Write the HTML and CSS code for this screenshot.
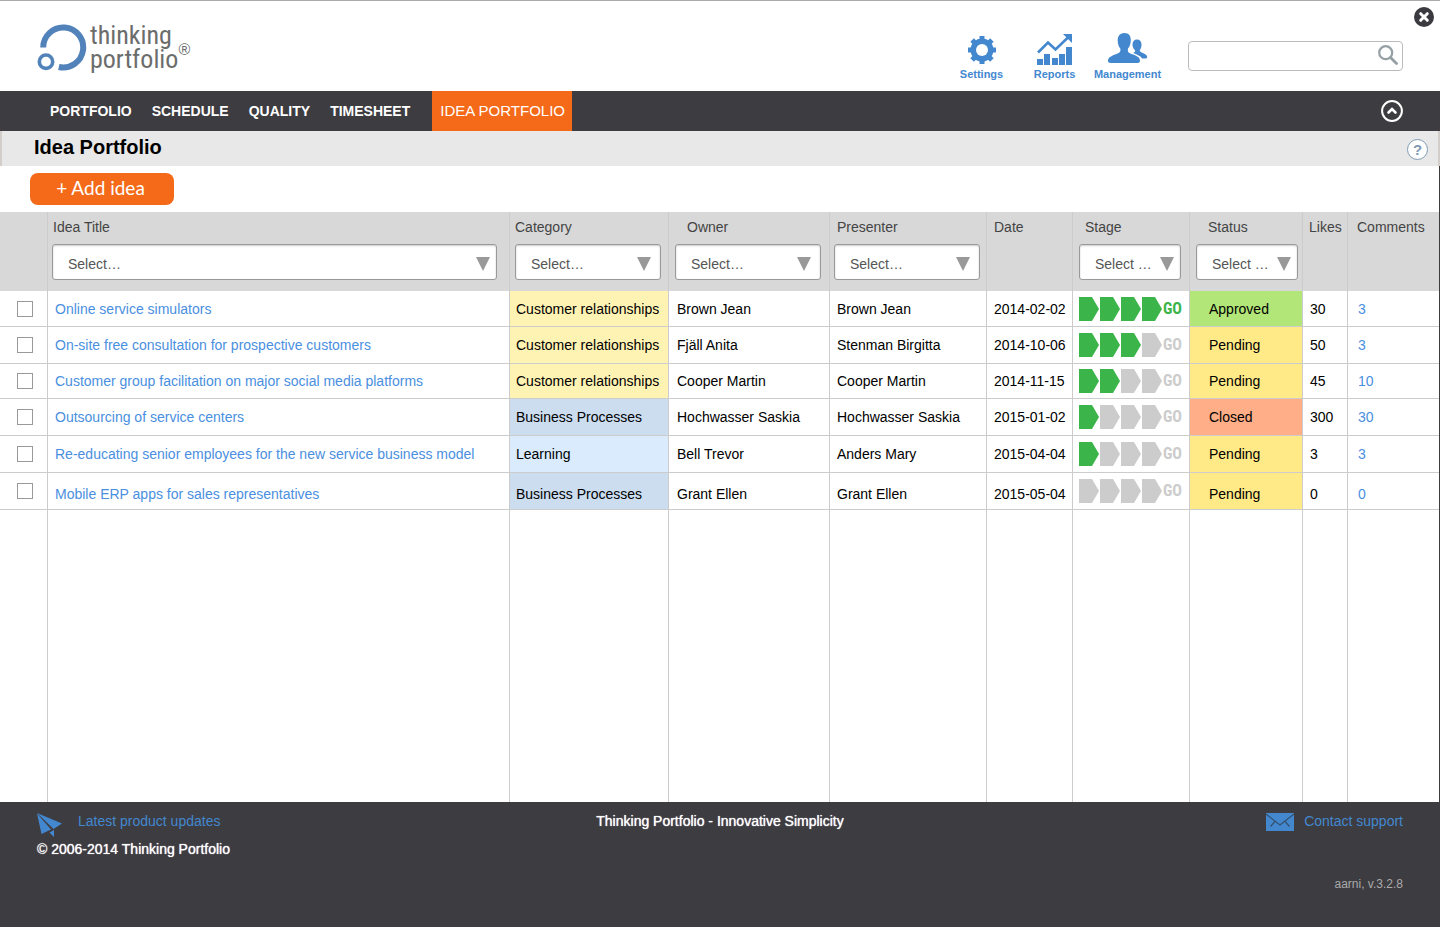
FILE: index.html
```html
<!DOCTYPE html>
<html lang="en">
<head>
<meta charset="utf-8">
<title>Idea Portfolio</title>
<link rel="stylesheet" href="styles.css">
</head>
<body>
<svg class="defs" aria-hidden="true">
  <symbol id="arrow" viewBox="0 0 20 24"><path d="M0 0h13l7 12-7 12H0z"/></symbol>
</svg>
<div class="page">
  <header class="top">
    <a class="logo" href="#" aria-label="Thinking Portfolio">
      <svg class="logo-mark" viewBox="37 22 50 48" fill="none" stroke="#5282ba">
        <path d="M43.200 46.500A20 20 0 1 1 58.800 66" stroke-width="6"/>
        <circle cx="46" cy="60.700" r="6.700" stroke-width="3.600"/>
      </svg>
      <span class="logo-text"><span>thinking</span><span>portfolio</span></span>
      <span class="logo-reg">®</span>
    </a>
    <div class="top-right">
      <nav class="actions" aria-label="Tools">
        <a href="#"><svg width="36" height="34" viewBox="0 0 36 34">
          <g fill="#4388cf"><path d="M15.500 5h5v28h-5z"/><path d="M15.500 5h5v28h-5z" transform="rotate(45 18 19)"/><path d="M15.500 5h5v28h-5z" transform="rotate(90 18 19)"/><path d="M15.500 5h5v28h-5z" transform="rotate(135 18 19)"/><circle cx="18" cy="19" r="11.500"/></g>
          <circle cx="18" cy="19" r="6" fill="#fff"/></svg>Settings</a>
        <a href="#"><svg width="36" height="34" viewBox="0 0 36 34">
          <g fill="#4388cf"><path d="M0 28h6v6H0zM7 23h6v11H7zM15 27h6v7h-6zM22 23h6v11h-6zM29 16h6v18h-6z"/><path d="M26 3h9v9z"/></g>
          <path d="M1 21.500L11 11.500l7.500 7L31.500 6" fill="none" stroke="#4388cf" stroke-width="2.600"/></svg>Reports</a>
        <a href="#"><svg width="40" height="34" viewBox="0 0 40 34"><g fill="#4388cf">
          <path d="M24.500 13.500c0-3 1.500-5 4.500-5s4.500 2 4.500 5c0 3-.8 4.500-1.800 6 0 2.500 7.500 2.800 7.500 6.500 0 1-1 1.500-2.500 1.500h-2.500c-2-3-6-4-9-5.500 1-1 2-1 2-2.500-1.500-1.500-2.700-3-2.700-6z"/>
          <path stroke="#fff" stroke-width="1" paint-order="stroke" d="M16.500 2c4.500 0 6.500 3 6.300 7.500-.2 3.500-1 6-2.800 8-.7 4 1 4.500 5 6 4.500 1.700 7 3 7 6.500 0 1.600-1.500 2-3 2H3c-2 0-3-.7-3-2 0-3.500 3-4.800 7-6.500 4-1.500 6-2 5.300-6-1.700-2-2.500-4.500-2.600-8C9.600 5 12 2 16.500 2z"/></g></svg>Management</a>
      </nav>
      <form class="search" role="search">
        <input type="search" aria-label="Search">
        <svg viewBox="0 0 20 20" width="20" height="20" fill="none" stroke="#96a0a4"><circle cx="7.700" cy="7.700" r="6.500" stroke-width="2.200"/><path d="M12.500 12.500l6 6" stroke-width="2.800" stroke-linecap="round"/></svg>
      </form>
    </div>
    <button class="close" type="button" aria-label="Close"><svg viewBox="0 0 20 20" width="20" height="20"><circle cx="10" cy="10" r="10" fill="#3b3a40"/><path d="M6.700 6.700l6.600 6.600M13.300 6.700l-6.600 6.600" stroke="#fff" stroke-width="3" stroke-linecap="round"/></svg></button>
  </header>

  <nav class="menu" aria-label="Main">
    <a href="#">PORTFOLIO</a><a href="#">SCHEDULE</a><a href="#">QUALITY</a><a href="#">TIMESHEET</a><a class="current" href="#">IDEA PORTFOLIO</a>
    <button type="button" aria-label="Collapse"><svg viewBox="0 0 22 22" width="22" height="22" fill="none" stroke="#fff"><circle cx="11" cy="11" r="9.900" stroke-width="2"/><path d="M7.500 12.500L11 9l3.500 3.500" stroke-width="2.600" stroke-linecap="round"/></svg></button>
  </nav>

  <div class="title-bar">
    <h1>Idea Portfolio</h1>
    <button class="help" type="button" aria-label="Help">?</button>
  </div>

  <main class="content">
    <div class="toolbar"><button class="add" type="button">+ Add idea</button></div>
    <table class="ideas">
      <colgroup><col class="w-check"><col><col class="w-category"><col class="w-owner"><col class="w-presenter"><col class="w-date"><col class="w-stage"><col class="w-status"><col class="w-likes"><col class="w-comments"></colgroup>
      <thead>
        <tr>
          <th class="check"></th>
          <th class="title"><label for="f-title">Idea Title</label><span class="pick"><select id="f-title"><option>Select…</option></select></span></th>
          <th class="category"><label for="f-category">Category</label><span class="pick"><select id="f-category"><option>Select…</option></select></span></th>
          <th class="owner"><label for="f-owner">Owner</label><span class="pick"><select id="f-owner"><option>Select…</option></select></span></th>
          <th class="presenter"><label for="f-presenter">Presenter</label><span class="pick"><select id="f-presenter"><option>Select…</option></select></span></th>
          <th class="date">Date</th>
          <th class="stage"><label for="f-stage">Stage</label><span class="pick"><select id="f-stage"><option>Select …</option></select></span></th>
          <th class="status"><label for="f-status">Status</label><span class="pick"><select id="f-status"><option>Select …</option></select></span></th>
          <th class="likes">Likes</th>
          <th class="comments">Comments</th>
        </tr>
      </thead>
      <tbody>
        <tr>
          <td class="check"><input type="checkbox" aria-label="Online service simulators"></td>
          <td class="title"><a href="#">Online service simulators</a></td>
          <td class="category customer">Customer relationships</td><td class="owner">Brown Jean</td><td class="presenter">Brown Jean</td><td class="date">2014-02-02</td>
          <td class="stage"><div class="steps"><svg class="on"><use href="#arrow"/></svg><svg class="on"><use href="#arrow"/></svg><svg class="on"><use href="#arrow"/></svg><svg class="on"><use href="#arrow"/></svg><span class="on">GO</span></div></td>
          <td class="status approved">Approved</td><td class="likes">30</td><td class="comments"><a href="#">3</a></td>
        </tr>
        <tr>
          <td class="check"><input type="checkbox" aria-label="On-site free consultation for prospective customers"></td>
          <td class="title"><a href="#">On-site free consultation for prospective customers</a></td>
          <td class="category customer">Customer relationships</td><td class="owner">Fjäll Anita</td><td class="presenter">Stenman Birgitta</td><td class="date">2014-10-06</td>
          <td class="stage"><div class="steps"><svg class="on"><use href="#arrow"/></svg><svg class="on"><use href="#arrow"/></svg><svg class="on"><use href="#arrow"/></svg><svg><use href="#arrow"/></svg><span>GO</span></div></td>
          <td class="status pending">Pending</td><td class="likes">50</td><td class="comments"><a href="#">3</a></td>
        </tr>
        <tr>
          <td class="check"><input type="checkbox" aria-label="Customer group facilitation on major social media platforms"></td>
          <td class="title"><a href="#">Customer group facilitation on major social media platforms</a></td>
          <td class="category customer">Customer relationships</td><td class="owner">Cooper Martin</td><td class="presenter">Cooper Martin</td><td class="date">2014-11-15</td>
          <td class="stage"><div class="steps"><svg class="on"><use href="#arrow"/></svg><svg class="on"><use href="#arrow"/></svg><svg><use href="#arrow"/></svg><svg><use href="#arrow"/></svg><span>GO</span></div></td>
          <td class="status pending">Pending</td><td class="likes">45</td><td class="comments"><a href="#">10</a></td>
        </tr>
        <tr>
          <td class="check"><input type="checkbox" aria-label="Outsourcing of service centers"></td>
          <td class="title"><a href="#">Outsourcing of service centers</a></td>
          <td class="category business">Business Processes</td><td class="owner">Hochwasser Saskia</td><td class="presenter">Hochwasser Saskia</td><td class="date">2015-01-02</td>
          <td class="stage"><div class="steps"><svg class="on"><use href="#arrow"/></svg><svg><use href="#arrow"/></svg><svg><use href="#arrow"/></svg><svg><use href="#arrow"/></svg><span>GO</span></div></td>
          <td class="status closed">Closed</td><td class="likes">300</td><td class="comments"><a href="#">30</a></td>
        </tr>
        <tr>
          <td class="check"><input type="checkbox" aria-label="Re-educating senior employees for the new service business model"></td>
          <td class="title"><a href="#">Re-educating senior employees for the new service business model</a></td>
          <td class="category learning">Learning</td><td class="owner">Bell Trevor</td><td class="presenter">Anders Mary</td><td class="date">2015-04-04</td>
          <td class="stage"><div class="steps"><svg class="on"><use href="#arrow"/></svg><svg><use href="#arrow"/></svg><svg><use href="#arrow"/></svg><svg><use href="#arrow"/></svg><span>GO</span></div></td>
          <td class="status pending">Pending</td><td class="likes">3</td><td class="comments"><a href="#">3</a></td>
        </tr>
        <tr class="last">
          <td class="check"><input type="checkbox" aria-label="Mobile ERP apps for sales representatives"></td>
          <td class="title"><a href="#">Mobile ERP apps for sales representatives</a></td>
          <td class="category business">Business Processes</td><td class="owner">Grant Ellen</td><td class="presenter">Grant Ellen</td><td class="date">2015-05-04</td>
          <td class="stage"><div class="steps"><svg><use href="#arrow"/></svg><svg><use href="#arrow"/></svg><svg><use href="#arrow"/></svg><svg><use href="#arrow"/></svg><span>GO</span></div></td>
          <td class="status pending">Pending</td><td class="likes">0</td><td class="comments"><a href="#">0</a></td>
        </tr>
        <tr class="rest" aria-hidden="true"><td></td><td></td><td></td><td></td><td></td><td></td><td></td><td></td><td></td><td></td></tr>
      </tbody>
    </table>
  </main>

  <footer class="footer">
    <div class="foot-left">
      <a href="#"><svg width="26" height="25" viewBox="0 0 26 25" fill="#4388cf"><path d="M0 0L25 10.500 16.500 16zM0 .5l14 16L4.500 21zM12.500 19.500l4.500-2.500v7z"/></svg>Latest product updates</a>
      <span class="strong">© 2006-2014 Thinking Portfolio</span>
    </div>
    <div class="foot-mid strong">Thinking Portfolio - Innovative Simplicity</div>
    <div class="foot-right">
      <a href="#"><svg width="28" height="18" viewBox="0 0 28 18"><path d="M0 0h28v18H0z" fill="#4388cf"/><path d="M0 1l14 11L28 1M9 8.500L4.500 13.500M19 8.500l4.500 5" fill="none" stroke="#35506e" stroke-width="1.200"/></svg>Contact support</a>
      <span class="version">aarni, v.3.2.8</span>
    </div>
  </footer>
</div>
</body>
</html>
```
FILE: styles.css
```css
* { box-sizing: border-box; }
body { margin: 0; font: 14px/18px "Liberation Sans", Arial, sans-serif; color: #000; background: #fff; }
a { color: #4a8fe0; text-decoration: none; }
button { padding: 0; border: 0; background: none; font: inherit; cursor: pointer; }
svg { display: block; flex: none; }
.defs { display: none; }
.page { min-height: 100vh; display: flex; flex-direction: column; }

.top { position: relative; height: 91px; padding: 0 37px; border-top: 1px solid #aaa; display: flex; justify-content: space-between; }
.logo { display: flex; align-items: flex-start; padding-top: 22px; color: #6b6d6c; }
.logo-mark { width: 50px; height: 48px; }
.logo-text { display: flex; flex-direction: column; padding-left: 3px; font: 26px/24px "Roboto Condensed", "Open Sans Condensed", "Liberation Sans", sans-serif; }
.logo-reg { padding-top: 18px; font-size: 16px; }
.top-right { display: flex; gap: 24px; }
.actions { display: grid; grid-template-columns: repeat(3, 73px); padding-top: 30px; }
.actions a { display: flex; flex-direction: column; align-items: center; gap: 2px; color: #4388cf; font-weight: bold; font-size: 11px; line-height: 14px; }
.search { position: relative; width: 215px; padding-top: 40px; }
.search input { width: 100%; height: 30px; padding: 0 34px 0 8px; border: 1px solid #bbb; border-radius: 4px; background: #fff; font: inherit; }
.search svg { position: absolute; right: 5px; top: 44px; }
.close { position: absolute; right: 6px; top: 6px; }

.menu { height: 40px; padding: 0 37px 0 50px; display: flex; align-items: stretch; gap: 20px; background: #3d3c41; }
.menu a { color: #fff; font-weight: bold; line-height: 40px; }
.menu .current { margin-left: 2px; padding: 0 7px 0 8px; background: #f56a18; font-weight: normal; font-size: 15px; }
.menu button { margin-left: auto; align-self: center; }

.title-bar { height: 35px; padding: 0 10px 0 32px; display: flex; justify-content: space-between; background: #e8e8e8; border: solid #d3cec9; border-width: 0 2px; }
.title-bar h1 { margin: 0; font-size: 20px; line-height: 32px; }
.help { width: 21px; height: 21px; margin-top: 8px; border: 1px solid #7f9bb3; border-radius: 50%; background: #fff; color: #7f9bb3; font-weight: bold; font-size: 15px; line-height: 19px; }

.content { flex: 1; display: flex; flex-direction: column; border-right: 1px solid #3d3c41; }
.toolbar { height: 46px; padding: 7px 30px; }
.add { height: 32px; width: 144px; padding: 0 3px 2px 0; border-radius: 8px; background: #f56a18; color: #fff; font: 19px/30px Lato, sans-serif; }

.ideas { flex: 1; width: 100%; table-layout: fixed; border-collapse: separate; border-spacing: 0; }
.w-check { width: 48px; }
.w-category { width: 159px; }
.w-owner { width: 161px; }
.w-presenter { width: 157px; }
.w-date { width: 86px; }
.w-stage { width: 117px; }
.w-status { width: 113px; }
.w-likes { width: 45px; }
.w-comments { width: 91px; }
.ideas th, .ideas td { border-right: 1px solid #ccc; white-space: nowrap; }
.ideas th:last-child, .ideas td:last-child { border-right: 0; }
.ideas th { height: 79px; padding: 6px 0 0; background: #d8d8d8; color: #444; font-weight: normal; text-align: left; vertical-align: top; }
.ideas label { display: block; margin-bottom: 8px; }
.ideas td { height: 37px; padding: 0; border-bottom: 1px solid #ccc; vertical-align: middle; }
.ideas tr:nth-child(1) td { height: 36px; }
.ideas tr:nth-child(3) td { height: 35px; }
.ideas .rest td { height: auto; border-bottom: 0; }
.ideas .last td:not(.check):not(.stage) { padding-top: 6px; }

.pick { position: relative; display: block; }
.pick::after { content: ""; position: absolute; right: 10px; top: 13px; width: 14px; height: 14px; background: #999; clip-path: polygon(0 0, 100% 0, 50% 100%); pointer-events: none; }
.title .pick::after, .stage .pick::after, .status .pick::after { right: 7px; }
.pick select { display: block; width: 100%; height: 36px; padding: 3px 15px 0; appearance: none; border: 1px solid #999; border-radius: 3px; background: #fff; box-shadow: inset 0 1px 2px #ccc; color: #555; font: inherit; }

.ideas th.title { padding-left: 4px; padding-right: 12px; }
.ideas th.category { padding-left: 5px; padding-right: 7px; }
.ideas th.owner { padding-left: 6px; padding-right: 8px; }
.ideas th.presenter { padding-left: 4px; padding-right: 6px; }
.ideas th.stage { padding-left: 6px; padding-right: 8px; }
.ideas th.status { padding-left: 6px; padding-right: 4px; }
th.title label { padding-left: 1px; }
th.owner label { padding-left: 12px; }
th.presenter label { padding-left: 3px; }
th.stage label { padding-left: 6px; }
th.status label { padding-left: 12px; }
.ideas .date, .ideas td.title, .ideas td.presenter { padding-left: 7px; }
.ideas th.likes { padding-left: 6px; }
.ideas td.likes { padding-left: 7px; }
.ideas th.comments { padding-left: 9px; }
.ideas td.comments { padding-left: 10px; }
.ideas td.category, .ideas td.stage { padding-left: 6px; }
.ideas td.owner { padding-left: 8px; }
.ideas td.status { padding-left: 19px; }
.ideas td.check { padding-left: 17px; }
.check input { display: block; width: 16px; height: 16px; margin: 0; appearance: none; border: 1px solid #999; background: #fff; }
.customer { background: #fff3b4; }
.business { background: #ccddf0; }
.learning { background: #d9ebfd; }
.approved { background: #b2e678; }
.pending { background: #ffea87; }
.closed { background: #ffae87; }

.steps { display: flex; align-items: center; gap: 1px; color: #ccc; font: bold 16px/22px "Roboto Condensed", "Open Sans Condensed", "Liberation Sans", sans-serif; }
.steps svg { width: 20px; height: 24px; fill: #ccc; }
.steps svg.on { fill: #3bb54a; }
.steps .on { color: #3bb54a; }

.footer { min-height: 125px; padding: 10px 37px; display: grid; grid-template-columns: 1fr auto 1fr; background: #3d3c41; color: #fff; }
.footer a { display: flex; color: #4388cf; }
.strong { text-shadow: 0 0 1px #fff; }
.foot-left a { gap: 15px; height: 28px; }
.foot-left svg, .foot-right svg { margin-top: 1px; }
.foot-right { display: flex; flex-direction: column; align-items: flex-end; gap: 44px; }
.foot-right a { gap: 10px; }
.version { color: #aaa; font-size: 12px; }
```
